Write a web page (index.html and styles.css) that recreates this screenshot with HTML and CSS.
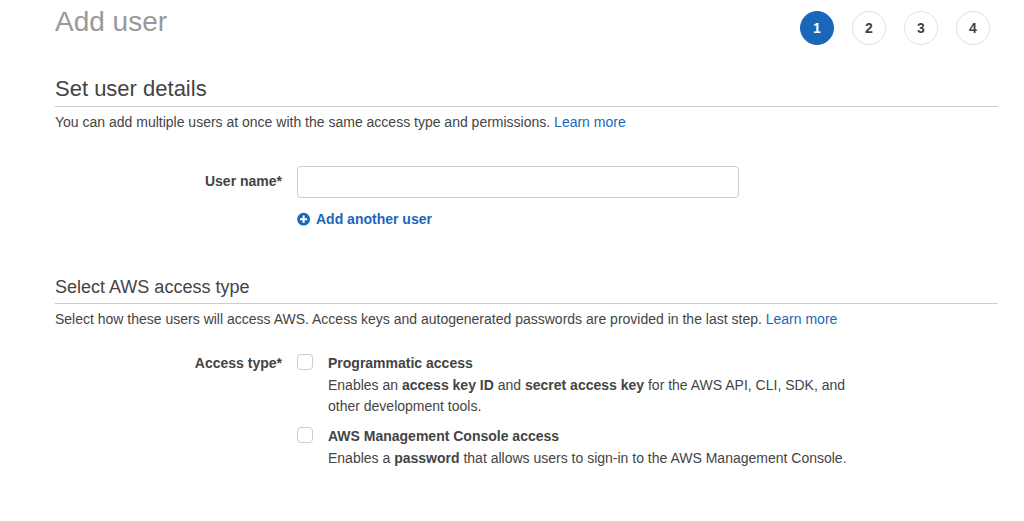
FILE: index.html
```html
<!DOCTYPE html>
<html lang="en">
<head>
<meta charset="utf-8">
<meta name="viewport" content="width=device-width, initial-scale=1">
<title>Add user</title>
<link rel="stylesheet" href="styles.css">
</head>
<body>
<main class="page">
  <header class="page-header">
    <h1 class="page-title">Add user</h1>
    <ol class="steps">
      <li class="step step-current" aria-current="step">1</li>
      <li class="step">2</li>
      <li class="step">3</li>
      <li class="step">4</li>
    </ol>
  </header>

  <form>
    <section class="details">
      <h2 class="section-title">Set user details</h2>
      <p class="intro">You can add multiple users at once with the same access type and permissions. <a class="link" href="#">Learn more</a></p>
      <div class="form-row user-row">
        <label class="row-label" for="user-name">User name*</label>
        <div class="row-body">
          <input class="text-input" id="user-name" type="text">
          <button class="add-button" type="button">
            <svg class="add-icon" viewBox="0 0 14 14" aria-hidden="true"><circle cx="6.6" cy="6.2" r="6.4" fill="#1a67ba"/><path d="M6.6 2.6v7.2M3 6.2h7.2" stroke="#fff" stroke-width="2.1"/></svg>
            Add another user
          </button>
        </div>
      </div>
    </section>

    <section class="access">
      <h2 class="section-title section-title-small">Select AWS access type</h2>
      <p class="intro">Select how these users will access AWS. Access keys and autogenerated passwords are provided in the last step. <a class="link" href="#">Learn more</a></p>
      <div class="form-row access-row" role="group" aria-labelledby="access-label">
        <span class="row-label" id="access-label">Access type*</span>
        <div class="options">
          <div class="option">
            <input class="checkbox" id="programmatic" type="checkbox">
            <div>
              <label class="option-title" for="programmatic">Programmatic access</label>
              <p class="option-text">Enables an <b>access key ID</b> and <b>secret access key</b> for the AWS API, CLI, SDK, and other development tools.</p>
            </div>
          </div>
          <div class="option">
            <input class="checkbox" id="console" type="checkbox">
            <div>
              <label class="option-title" for="console">AWS Management Console access</label>
              <p class="option-text">Enables a <b>password</b> that allows users to sign-in to the AWS Management Console.</p>
            </div>
          </div>
        </div>
      </div>
    </section>
  </form>
</main>
</body>
</html>
```
FILE: styles.css
```css
* {
  box-sizing: border-box;
}

body {
  margin: 0;
  background: #fff;
  color: #444;
  font: 14px/21px "Liberation Sans", Arial, sans-serif;
}

h1, h2, p, ol {
  margin: 0;
  padding: 0;
}

.page {
  padding: 7px 26px 24px 55px;
}

.page-header {
  display: flex;
  justify-content: space-between;
}

.page-title {
  color: #999;
  font-size: 28px;
  font-weight: 400;
  line-height: 30px;
}

.steps {
  display: flex;
  gap: 18px;
  margin: 4px 8px 0 0;
  list-style: none;
}

.step {
  display: flex;
  align-items: center;
  justify-content: center;
  width: 34px;
  height: 34px;
  border: 1px solid #e2e2e2;
  border-radius: 50%;
  font-weight: 700;
}

.step-current {
  border-color: #1a67ba;
  background: #1a67ba;
  color: #fff;
}

.details {
  margin-top: 31px;
}

.section-title {
  padding-bottom: 4px;
  border-bottom: 1px solid #ccc;
  font-size: 22px;
  font-weight: 400;
  line-height: 26px;
}

.section-title-small {
  padding-bottom: 3px;
  font-size: 18px;
}

.intro {
  padding-top: 5px;
}

.link {
  color: #1a67ba;
  text-decoration: none;
}

.form-row {
  display: flex;
  gap: 15px;
}

.user-row {
  margin-top: 33px;
}

.row-label {
  flex: none;
  width: 227px;
  font-weight: 700;
  text-align: right;
}

.user-row .row-label {
  padding-top: 5px;
}

.row-body {
  flex: 0 1 442px;
}

.text-input {
  display: block;
  width: 100%;
  height: 32px;
  padding: 4px 8px;
  border: 1px solid #ccc;
  border-radius: 4px;
  font: inherit;
}

.add-button {
  display: flex;
  align-items: center;
  gap: 5px;
  margin-top: 11px;
  padding: 0;
  border: 0;
  background: none;
  color: #1a67ba;
  font: inherit;
  font-weight: 700;
  cursor: pointer;
}

.add-icon {
  width: 14px;
  height: 14px;
  overflow: visible;
}

.access {
  margin-top: 44px;
}

.access-row {
  margin-top: 23px;
}

.options {
  flex: 0 1 560px;
  display: grid;
  gap: 9px;
}

.option {
  display: flex;
  gap: 15px;
}

.checkbox {
  flex: none;
  appearance: none;
  width: 16px;
  height: 16px;
  margin: 1px 0 0;
  border: 1px solid #ccc;
  border-radius: 4px;
  background: #fff;
}

.checkbox:checked {
  background: #1a67ba;
}

.option-title {
  display: block;
  font-weight: 700;
}

.option-text {
  margin-top: 1px;
}
```
